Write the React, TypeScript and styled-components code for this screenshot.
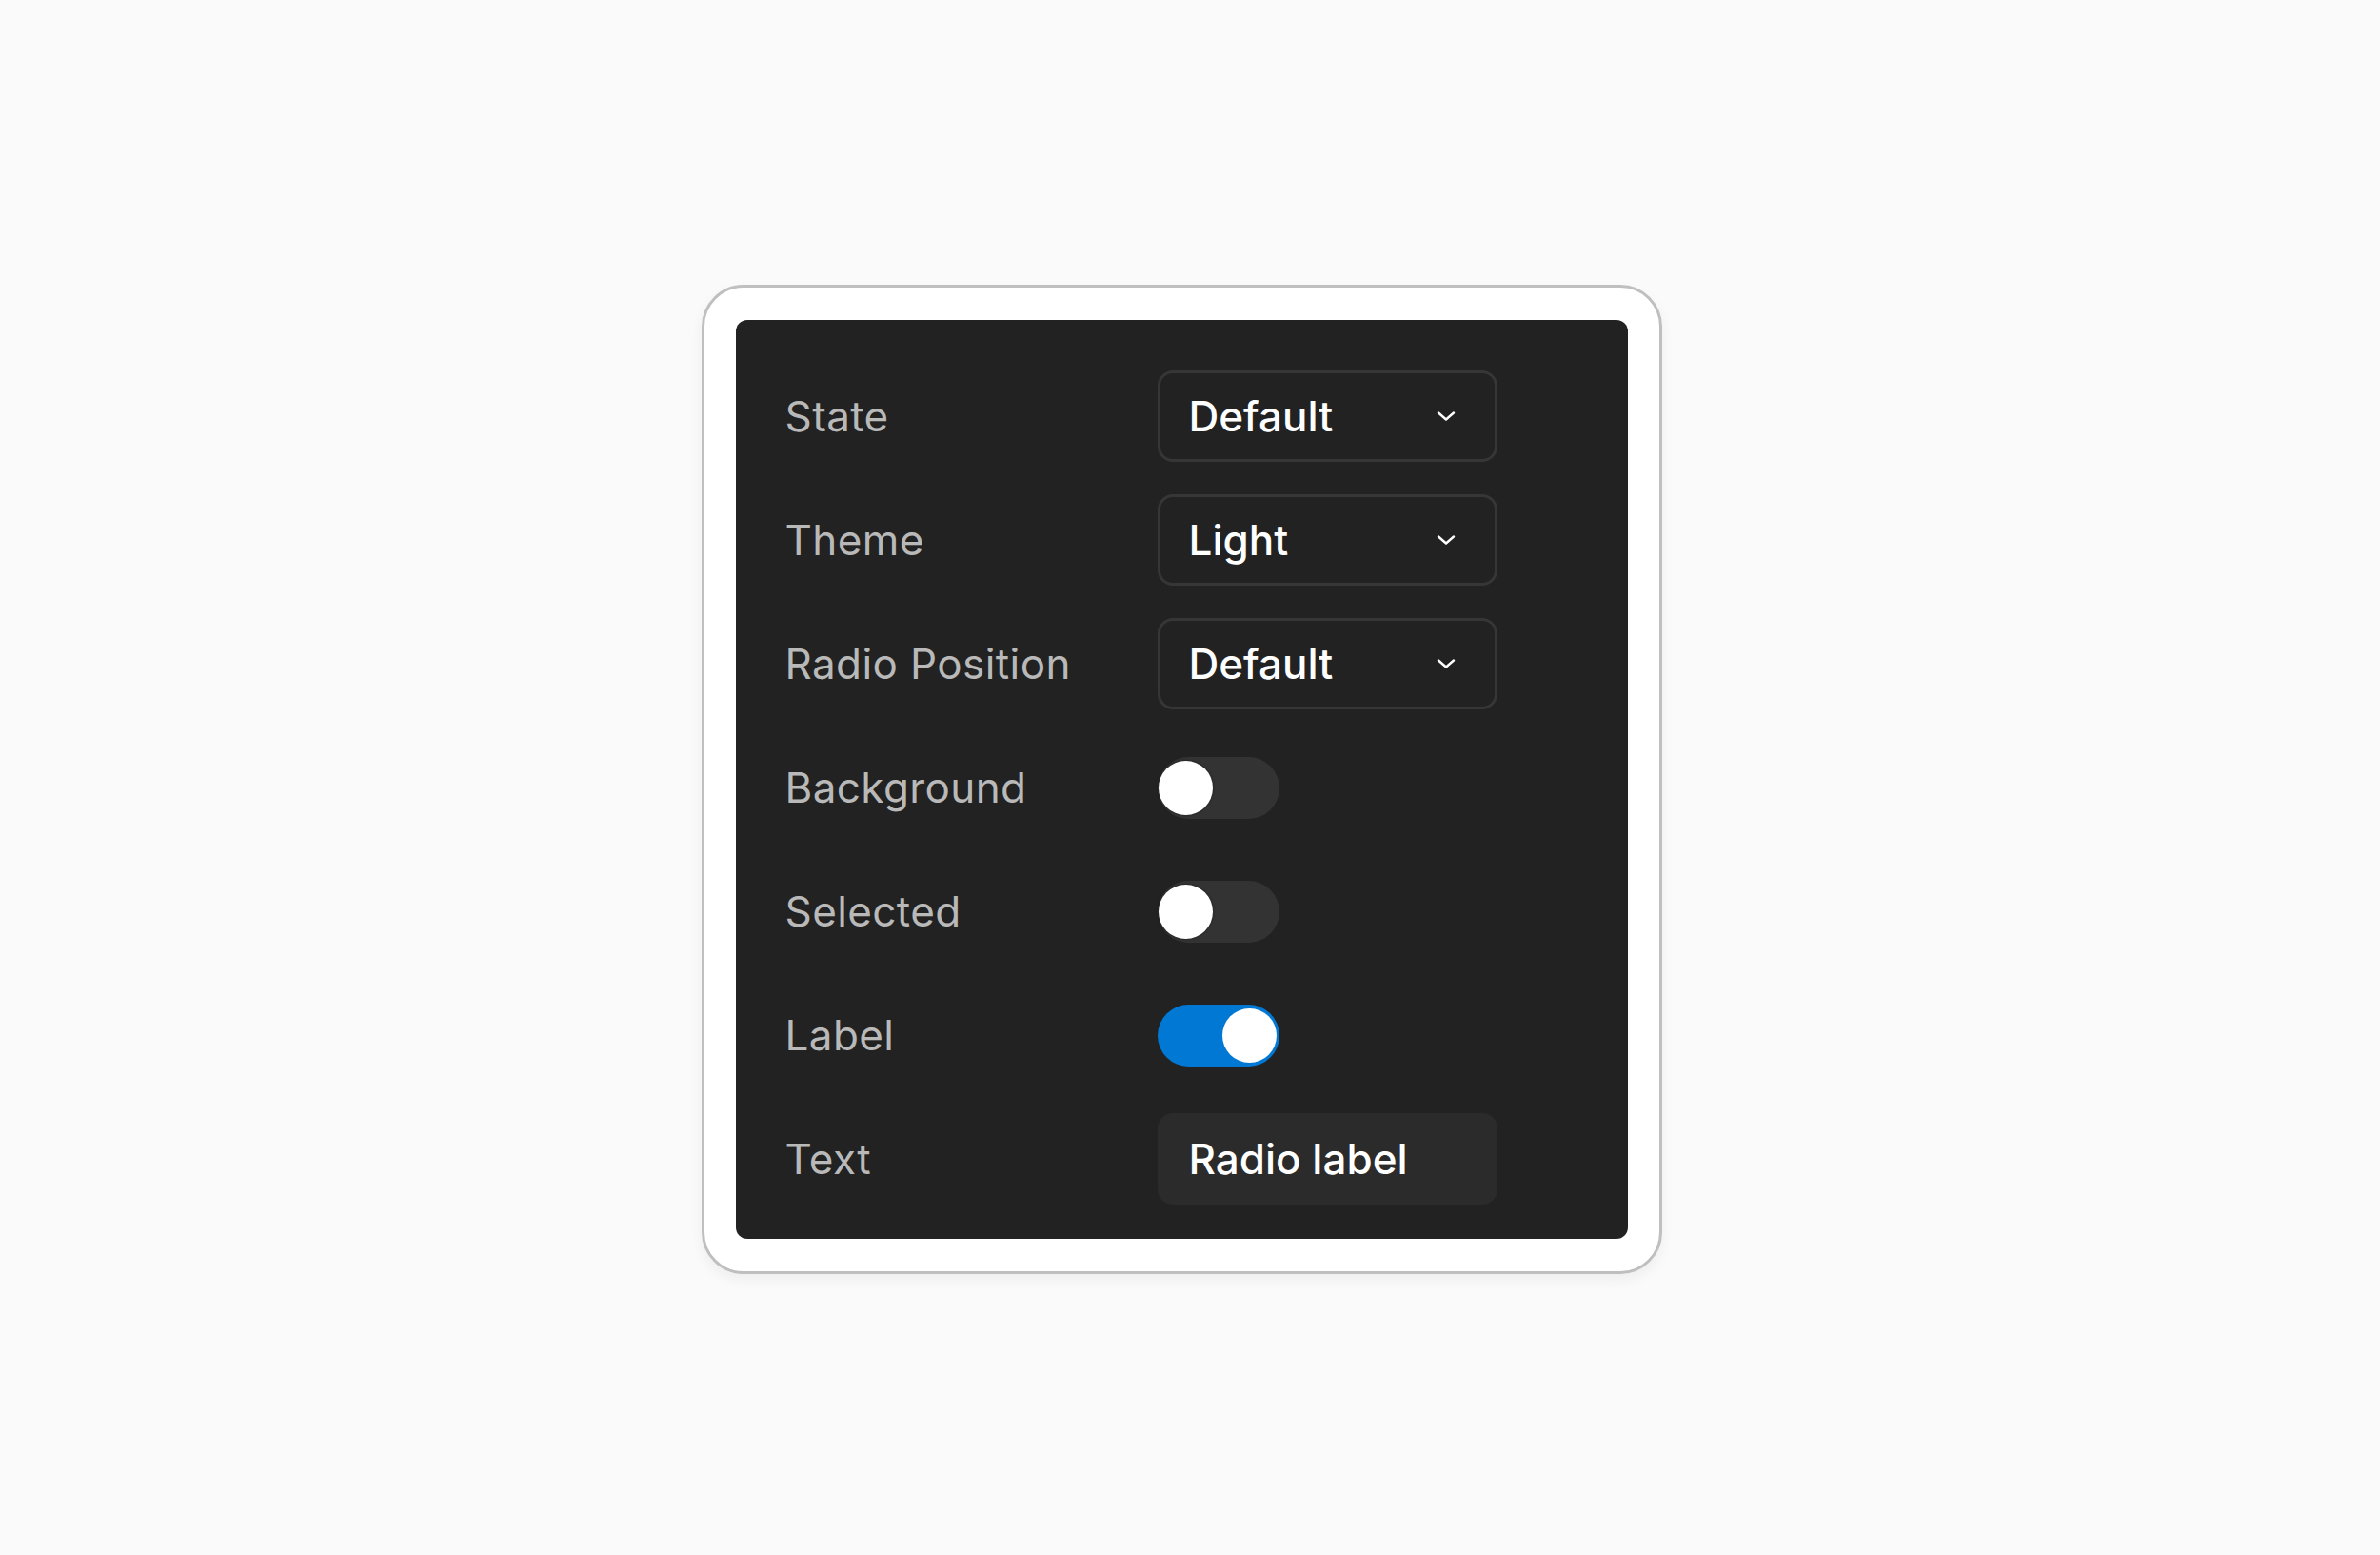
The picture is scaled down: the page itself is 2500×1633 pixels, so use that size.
import React from "react";
import styled, { createGlobalStyle } from "styled-components";

type Control =
  | { kind: "select"; value: string }
  | { kind: "toggle"; on: boolean }
  | { kind: "text"; value: string };

type Prop = { label: string; control: Control };

const props: Prop[] = [
  { label: "State", control: { kind: "select", value: "Default" } },
  { label: "Theme", control: { kind: "select", value: "Light" } },
  { label: "Radio Position", control: { kind: "select", value: "Default" } },
  { label: "Background", control: { kind: "toggle", on: false } },
  { label: "Selected", control: { kind: "toggle", on: false } },
  { label: "Label", control: { kind: "toggle", on: true } },
  { label: "Text", control: { kind: "text", value: "Radio label" } },
];

function Chevron() {
  return (
    <svg width="22" height="14" viewBox="0 0 22 14" fill="none">
      <path d="M3 3.5 L11 10.5 L19 3.5" stroke="#fff" strokeWidth="2.4" strokeLinecap="round" strokeLinejoin="round" />
    </svg>
  );
}

function renderControl(c: Control) {
  if (c.kind === "select") {
    return (
      <Select>
        <Value>{c.value}</Value>
        <Chevron />
      </Select>
    );
  }
  if (c.kind === "toggle") {
    return (
      <Track $on={c.on}>
        <Knob $on={c.on} />
      </Track>
    );
  }
  return (
    <TextField>
      <Value>{c.value}</Value>
    </TextField>
  );
}

export default function App() {
  return (
    <>
      <Global />
      <Page>
        <Frame>
          <Panel>
            {props.map((p) => (
              <React.Fragment key={p.label}>
                <Label>{p.label}</Label>
                <Cell>{renderControl(p.control)}</Cell>
              </React.Fragment>
            ))}
          </Panel>
        </Frame>
      </Page>
    </>
  );
}

const Global = createGlobalStyle`
  html, body {
    margin: 0;
    padding: 0;
    background: #fafafa;
  }
  body {
    font-family: Inter, "Noto Sans", sans-serif;
  }
`;

const Page = styled.div`
  width: 100vw;
  height: 100vh;
  box-sizing: border-box;
  display: grid;
  place-items: center;
  padding: 4px 18px 0 0;
`;

const Frame = styled.div`
  background: #fff;
  border: 3px solid #bfbfbf;
  border-radius: 44px;
  padding: 34px 33px;
  box-shadow: 0 6px 14px rgba(0, 0, 0, 0.05);
`;

const Panel = styled.div`
  background: #222222;
  border-radius: 12px;
  padding: 53px 137px 36px 52px;
  display: grid;
  grid-template-columns: 391px 357px;
  grid-auto-rows: 96px;
  row-gap: 34px;
  align-items: center;
`;

const Label = styled.div`
  font-size: 44px;
  line-height: 1;
  font-weight: 400;
  letter-spacing: 0.4px;
  color: #b9b9b9;
`;

const Cell = styled.div`
  display: flex;
  align-items: center;
  height: 100%;
`;

const Value = styled.span`
  font-size: 44px;
  line-height: 1;
  font-weight: 500;
  color: #fff;
`;

const Select = styled.div`
  box-sizing: border-box;
  width: 357px;
  height: 96px;
  border: 3px solid #363636;
  border-radius: 16px;
  display: flex;
  align-items: center;
  justify-content: space-between;
  padding: 0 40px 0 30px;
`;

const TextField = styled.div`
  box-sizing: border-box;
  width: 357px;
  height: 96px;
  background: #2b2b2b;
  border-radius: 16px;
  display: flex;
  align-items: center;
  padding: 0 33px;
`;

const Track = styled.div<{ $on: boolean }>`
  box-sizing: border-box;
  width: 128px;
  height: 65px;
  border-radius: 999px;
  background: ${(p) => (p.$on ? "#0078d4" : "#333333")};
  display: flex;
  align-items: center;
  justify-content: ${(p) => (p.$on ? "flex-end" : "flex-start")};
  padding: 0 ${(p) => (p.$on ? "3px" : "1px")};
`;

const Knob = styled.div<{ $on: boolean }>`
  width: 57px;
  height: 57px;
  border-radius: 50%;
  background: #fff;
  box-shadow: ${(p) => (p.$on ? "none" : "0 0 3px rgba(0, 0, 0, 0.45)")};
`;
